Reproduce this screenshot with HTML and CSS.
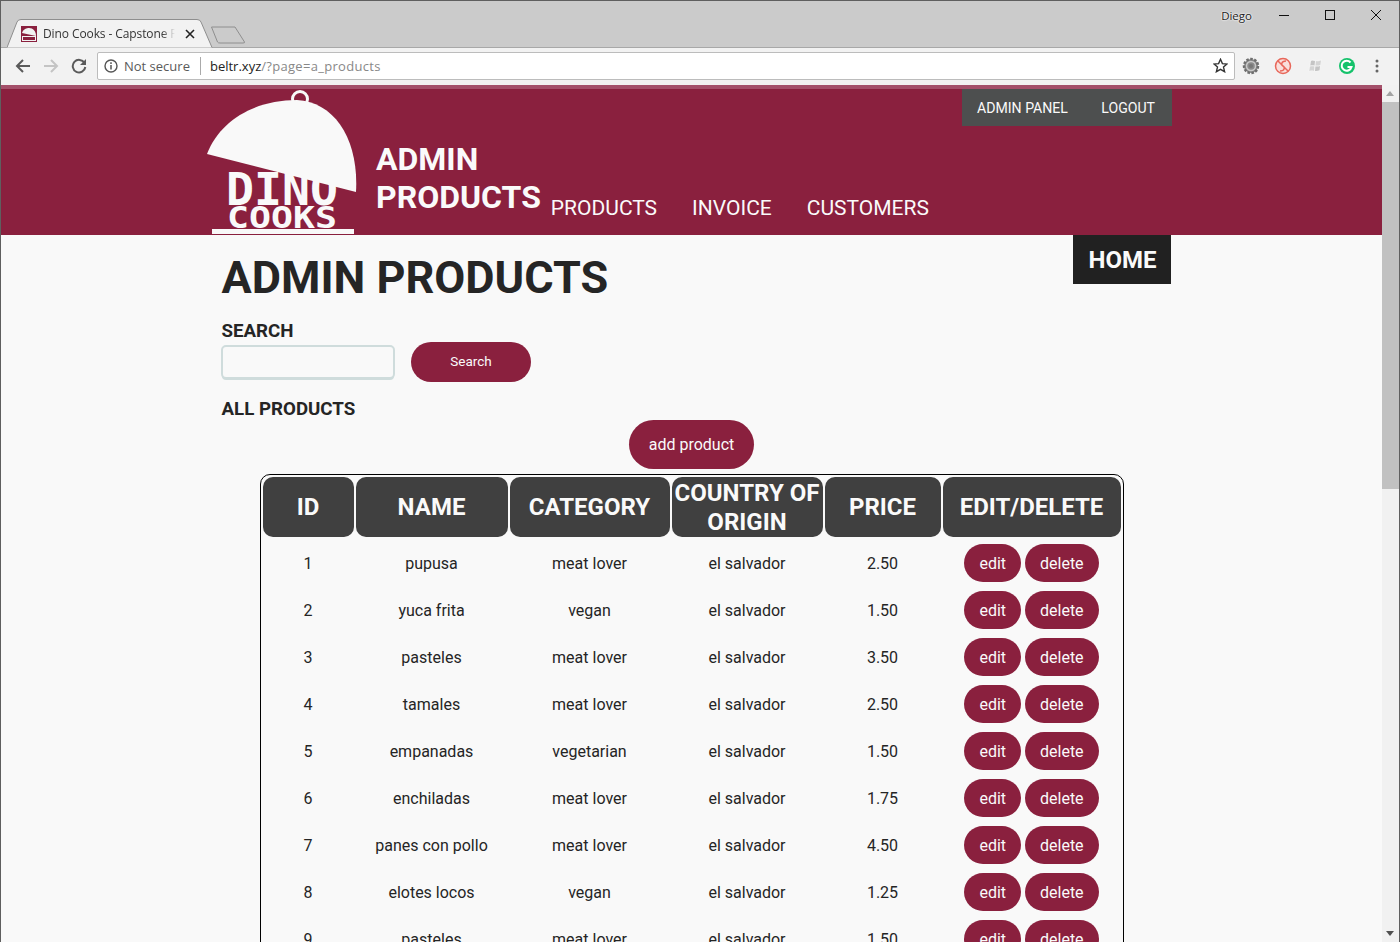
FILE: index.html
```html
<!DOCTYPE html>
<html>
    <head>
        <meta charset="utf-8">
        <title>Dino Cooks - Capstone Project</title>
        <link rel="stylesheet" href="styles.css">
    </head>

    <body>
        <div class="window">

            <!-- browser title bar and tab -->
            <div class="titleBar">
                <div class="tab">
                    <svg class="tabShape" width="206" height="29" viewBox="0 0 206 29">
                        <path d="M0 28.5 L10 3 Q11 .5 14 .5 H190 Q193 .5 194 3 L205 28.5" fill="#f2f2f2" stroke="#8e8e8e"/>
                    </svg>
                    <svg class="favicon" width="16" height="16" viewBox="0 0 16 16">
                        <rect width="16" height="16" fill="#8a203e"/>
                        <path d="M1 7 C2 3 6 2 8 2 C12 2 15 5 15 10 Z" fill="#f2f2f2"/>
                        <rect x="1" y="10" width="14" height="5" fill="#f2f2f2"/>
                        <rect x="2" y="11" width="12" height="3" fill="#8a203e"/>
                    </svg>
                    <span class="tabTitle">Dino Cooks - Capstone P</span>
                    <svg class="tabClose" width="10" height="10" viewBox="0 0 10 10">
                        <path d="M1 1 L9 9 M9 1 L1 9" stroke="#222" stroke-width="1.6"/>
                    </svg>
                </div>
                <svg class="newTab" width="36" height="18" viewBox="0 0 36 18">
                    <path d="M1.500 1 H25 L34.500 16 Q35 17 33 17 H10 Q8 17 7.500 16 Z" fill="#cbcbcb" stroke="#8e8e8e"/>
                </svg>
                <span class="userName">Diego</span>
                <div class="windowButtons">
                    <svg width="10" height="10" viewBox="0 0 10 10"><path d="M0 5.500 H10" stroke="#111"/></svg>
                    <svg width="10" height="10" viewBox="0 0 10 10"><rect x=".5" y=".5" width="9" height="9" fill="none" stroke="#111"/></svg>
                    <svg width="10" height="10" viewBox="0 0 10 10"><path d="M0 0 L10 10 M10 0 L0 10" stroke="#111"/></svg>
                </div>
            </div>

            <!-- browser toolbar -->
            <div class="toolBar">
                <svg class="navIcon" width="16" height="16" viewBox="0 0 16 16">
                    <path d="M15 8 H2 M8 2 L2 8 L8 14" fill="none" stroke="#5a5a5a" stroke-width="2"/>
                </svg>
                <svg class="navIcon" width="16" height="16" viewBox="0 0 16 16">
                    <path d="M1 8 H14 M8 2 L14 8 L8 14" fill="none" stroke="#c4c4c4" stroke-width="2"/>
                </svg>
                <svg class="navIcon" width="16" height="16" viewBox="0 0 16 16">
                    <path d="M13.500 5 A6.300 6.300 0 1 0 14.300 9" fill="none" stroke="#5a5a5a" stroke-width="2"/>
                    <path d="M15 1 V7 H9 Z" fill="#5a5a5a"/>
                </svg>
                <div class="addressBar">
                    <svg width="14" height="14" viewBox="0 0 14 14">
                        <circle cx="7" cy="7" r="6" fill="none" stroke="#555" stroke-width="1.400"/>
                        <path d="M7 6 V10.500 M7 3.300 V5" stroke="#555" stroke-width="1.500"/>
                    </svg>
                    <span class="notSecure">Not secure</span>
                    <span class="urlHost">beltr.xyz</span><span class="urlPath">/?page=a_products</span>
                    <svg class="star" width="15" height="15" viewBox="0 0 15 15">
                        <path d="M7.500 1.300 L9.400 5.600 L14 6 L10.500 9.100 L11.600 13.700 L7.500 11.300 L3.400 13.700 L4.500 9.100 L1 6 L5.600 5.600 Z" fill="none" stroke="#333" stroke-width="1.400"/>
                    </svg>
                </div>
                <div class="extensions">
                    <svg width="18" height="18" viewBox="0 0 18 18">
                        <circle cx="9" cy="9" r="7" fill="#8a8a8a" stroke="#6e6e6e" stroke-width="2.500" stroke-dasharray="2.500 1.500"/>
                        <circle cx="9" cy="9" r="4.500" fill="none" stroke="#c9c9c9" stroke-width="1.500"/>
                        <circle cx="9" cy="9" r="2" fill="#777"/>
                    </svg>
                    <svg width="18" height="18" viewBox="0 0 18 18">
                        <circle cx="9" cy="9" r="7.500" fill="#f9dfdb" stroke="#e8675a" stroke-width="1.500"/>
                        <path d="M4 4 L14 14 M12 4 C7 4 7 8 9 9 C11 10 11 14 6 14" fill="none" stroke="#e8675a" stroke-width="1.500"/>
                    </svg>
                    <svg width="18" height="18" viewBox="0 0 18 18">
                        <path d="M4 3 C7 1 9 4 16 2 L14 14 C8 16 6 13 2 15 Z" fill="#f4f4f4"/>
                        <path d="M5 4 C6 3 7 3.500 9 4 L8.500 8.500 C7 8 6 8 4.300 8.500 Z" fill="#c4c4c4"/>
                        <path d="M10 4 C12 4.500 13 4 15 3.500 L14.300 8 C13 8.500 11.500 8.800 9.500 8.500 Z" fill="#d4d4d4"/>
                        <path d="M4 9.500 C6 9 7 9 8.300 9.500 L8 14 C7 13.500 5.500 13.300 3.300 14 Z" fill="#d4d4d4"/>
                        <path d="M9.400 9.500 C11.500 9.800 13 9.500 14 9 L13.500 13.300 C12 14 10.500 14.300 9 14 Z" fill="#c4c4c4"/>
                    </svg>
                    <svg width="18" height="18" viewBox="0 0 18 18">
                        <circle cx="9" cy="9" r="8" fill="#15c26b"/>
                        <path d="M12.500 5.500 A5 5 0 1 0 13.500 10 H9.500" fill="none" stroke="#fff" stroke-width="2"/>
                    </svg>
                    <svg class="menuDots" width="4" height="14" viewBox="0 0 4 14">
                        <circle cx="2" cy="2" r="1.500" fill="#666"/>
                        <circle cx="2" cy="7" r="1.500" fill="#666"/>
                        <circle cx="2" cy="12" r="1.500" fill="#666"/>
                    </svg>
                </div>
            </div>

            <div class="viewport">
                <div class="page">

                    <div class="headerDiv">
                        <svg class="logo" width="150" height="146" viewBox="0 0 150 146">
                            <text class="logoDino" x="19" y="116" textLength="112" lengthAdjust="spacingAndGlyphs">DINO</text>
                            <text class="logoCooks" x="20" y="139" textLength="110" lengthAdjust="spacingAndGlyphs">COOKS</text>
                            <rect x="5" y="140" width="142" height="5" fill="#f9f9f9"/>
                            <circle cx="93" cy="10" r="7.500" fill="none" stroke="#f9f9f9" stroke-width="3"/>
                            <path d="M0 65 C13 31 48 11 90 11 C128 13 152 51 149 103 Z" fill="#f9f9f9"/>
                        </svg>
                        <h1 class="headerTitle">ADMIN<br>PRODUCTS</h1>
                        <div class="mainNav">
                            <a>PRODUCTS</a>
                            <a>INVOICE</a>
                            <a>CUSTOMERS</a>
                        </div>
                        <div class="adminNav">
                            <a>ADMIN PANEL</a>
                            <a>LOGOUT</a>
                        </div>
                    </div>

                    <div class="contentDiv">
                        <a class="homeLink">HOME</a>
                        <h1 class="pageTitle">ADMIN PRODUCTS</h1>

                        <h3 class="searchLabel">SEARCH</h3>
                        <div class="searchRow">
                            <input class="searchInput" type="text">
                            <button class="pillButton searchButton">Search</button>
                        </div>

                        <h3 class="allLabel">ALL PRODUCTS</h3>
                        <div class="addRow">
                            <button class="pillButton addButton">add product</button>
                        </div>

                        <table class="productTable">
                            <colgroup>
                                <col class="colId"><col class="colName"><col class="colCategory">
                                <col class="colCountry"><col class="colPrice"><col class="colEdit">
                            </colgroup>
                            <tr>
                                <th>ID</th><th>NAME</th><th>CATEGORY</th><th class="wrapHead">COUNTRY OF ORIGIN</th><th>PRICE</th><th>EDIT/DELETE</th>
                            </tr>
                            <tr>
                                <td>1</td><td>pupusa</td><td>meat lover</td><td>el salvador</td><td>2.50</td>
                                <td class="actionCell"><button class="pillButton">edit</button> <button class="pillButton">delete</button></td>
                            </tr>
                            <tr>
                                <td>2</td><td>yuca frita</td><td>vegan</td><td>el salvador</td><td>1.50</td>
                                <td class="actionCell"><button class="pillButton">edit</button> <button class="pillButton">delete</button></td>
                            </tr>
                            <tr>
                                <td>3</td><td>pasteles</td><td>meat lover</td><td>el salvador</td><td>3.50</td>
                                <td class="actionCell"><button class="pillButton">edit</button> <button class="pillButton">delete</button></td>
                            </tr>
                            <tr>
                                <td>4</td><td>tamales</td><td>meat lover</td><td>el salvador</td><td>2.50</td>
                                <td class="actionCell"><button class="pillButton">edit</button> <button class="pillButton">delete</button></td>
                            </tr>
                            <tr>
                                <td>5</td><td>empanadas</td><td>vegetarian</td><td>el salvador</td><td>1.50</td>
                                <td class="actionCell"><button class="pillButton">edit</button> <button class="pillButton">delete</button></td>
                            </tr>
                            <tr>
                                <td>6</td><td>enchiladas</td><td>meat lover</td><td>el salvador</td><td>1.75</td>
                                <td class="actionCell"><button class="pillButton">edit</button> <button class="pillButton">delete</button></td>
                            </tr>
                            <tr>
                                <td>7</td><td>panes con pollo</td><td>meat lover</td><td>el salvador</td><td>4.50</td>
                                <td class="actionCell"><button class="pillButton">edit</button> <button class="pillButton">delete</button></td>
                            </tr>
                            <tr>
                                <td>8</td><td>elotes locos</td><td>vegan</td><td>el salvador</td><td>1.25</td>
                                <td class="actionCell"><button class="pillButton">edit</button> <button class="pillButton">delete</button></td>
                            </tr>
                            <tr>
                                <td>9</td><td>pasteles</td><td>meat lover</td><td>el salvador</td><td>1.50</td>
                                <td class="actionCell"><button class="pillButton">edit</button> <button class="pillButton">delete</button></td>
                            </tr>
                        </table>
                    </div>

                </div>

                <div class="scrollBar">
                    <span class="scrollUp"></span>
                    <span class="scrollThumb"></span>
                    <span class="scrollGap"></span>
                    <span class="scrollDown"></span>
                </div>
            </div>

        </div>
    </body>
</html>
```

FILE: styles.css
```css
* {
    box-sizing: border-box;
}

html, body {
    margin: 0;
    height: 100%;
    overflow: hidden;
}

body {
    font-family: Roboto, "Liberation Sans", sans-serif;
    color: #252525;
}

.window {
    display: flex;
    flex-direction: column;
    width: 1400px;
    height: 942px;
    border: 1px solid #5f5f5f;
    border-bottom: none;
    background-color: #f9f9f9;
}

/* browser chrome */

.titleBar {
    display: flex;
    align-items: flex-start;
    height: 46px;
    flex: none;
    background-color: #cbcbcb;
}

.tab {
    position: relative;
    display: flex;
    align-items: center;
    width: 206px;
    height: 29px;
    margin-top: 18px;
    margin-left: 6px;
    padding-left: 14px;
}

.tabShape {
    position: absolute;
    left: 0;
    top: 0;
}

.favicon, .tabTitle, .tabClose {
    position: relative;
}

.tabTitle {
    width: 132px;
    margin-left: 6px;
    overflow: hidden;
    white-space: nowrap;
    font-family: "Open Sans", sans-serif;
    font-size: 12px;
    letter-spacing: -.1px;
    color: #333;
    -webkit-mask-image: linear-gradient(to right, #000 90%, transparent);
    mask-image: linear-gradient(to right, #000 90%, transparent);
}

.tabClose {
    margin-left: 10px;
}

.newTab {
    margin-top: 25px;
    margin-left: -3px;
}

.userName {
    margin-left: auto;
    margin-top: 7px;
    font-family: "Open Sans", sans-serif;
    font-size: 11.5px;
    color: #222;
    text-shadow: 0 0 2px #fff, 0 0 2px #fff;
}

.windowButtons {
    display: flex;
    gap: 36px;
    margin-top: 9px;
    margin-left: 27px;
    margin-right: 18px;
}

.toolBar {
    display: flex;
    align-items: center;
    height: 38px;
    flex: none;
    padding-left: 14px;
    padding-bottom: 2px;
    border-top: 1px solid #a8a8a8;
    background-color: #f2f2f2;
}

.navIcon {
    margin-right: 12px;
}

.addressBar {
    display: flex;
    align-items: center;
    width: 1138px;
    height: 28px;
    margin-left: -2px;
    padding: 0 6px;
    border: 1px solid #bcbcbc;
    border-radius: 2px;
    background-color: #fff;
    font-family: "Open Sans", sans-serif;
    font-size: 13px;
}

.notSecure {
    margin-left: 6px;
    padding-right: 10px;
    margin-right: 9px;
    color: #5a5a5a;
    border-right: 1px solid #aaa;
}

.urlHost {
    color: #222;
}

.urlPath {
    color: #888;
    letter-spacing: .3px;
}

.star {
    margin-left: auto;
}

.extensions {
    display: flex;
    align-items: center;
    gap: 14px;
    margin-left: 7px;
}

.menuDots {
    margin-left: 5px;
}

/* page */

.viewport {
    display: flex;
    flex: 1;
    min-height: 0;
}

.page {
    flex: 1;
    min-width: 0;
    overflow: hidden;
}

.scrollBar {
    display: flex;
    flex-direction: column;
    width: 17px;
    flex: none;
    background-color: #f1f1f1;
}

.scrollUp, .scrollDown {
    height: 17px;
    flex: none;
    position: relative;
}

.scrollUp::after {
    content: "";
    position: absolute;
    left: 4px;
    top: 6px;
    border: 4px solid transparent;
    border-top: none;
    border-bottom: 5px solid #a3a3a3;
}

.scrollDown::after {
    content: "";
    position: absolute;
    left: 4px;
    top: 6px;
    border: 4px solid transparent;
    border-bottom: none;
    border-top: 5px solid #505050;
}

.scrollThumb {
    height: 387px;
    flex: none;
    background-color: #c1c1c1;
}

.scrollGap {
    flex: 1;
}

.headerDiv {
    display: flex;
    align-items: flex-end;
    height: 150px;
    padding-left: 206px;
    padding-right: 210px;
    border-top: 4px solid #a4506a;
    background-color: #8a203e;
    color: #fafafa;
}

.logo {
    flex: none;
}

.logoDino {
    font-family: "DejaVu Sans Mono", monospace;
    font-weight: bold;
    font-size: 44px;
    fill: #f9f9f9;
}

.logoCooks {
    font-family: "DejaVu Sans Mono", monospace;
    font-weight: bold;
    font-size: 31px;
    fill: #f9f9f9;
}

.headerTitle {
    margin: 0 0 19px 19px;
    font-size: 32px;
    line-height: 38px;
    font-weight: 700;
}

.mainNav {
    display: flex;
    gap: 35px;
    margin-left: 10px;
    margin-bottom: 14px;
    font-size: 21px;
    line-height: 26px;
}

.adminNav {
    display: flex;
    align-self: flex-start;
    justify-content: space-between;
    margin-left: auto;
    width: 210px;
    padding: 0 17px 0 15px;
    height: 37px;
    align-items: center;
    background-color: #4d4f4f;
    font-size: 14.1px;
}

.contentDiv {
    width: 960px;
    margin: 0 auto;
    padding: 0 10px;
}

.homeLink {
    float: right;
    margin-right: -9px;
    padding: 0 14px 0 15px;
    height: 49px;
    line-height: 50px;
    background-color: #212121;
    color: #fafafa;
    font-size: 24px;
    font-weight: 700;
}

.pageTitle {
    margin: 0;
    padding-top: 16px;
    font-size: 45px;
    line-height: 53px;
    font-weight: 700;
}

.searchLabel {
    margin: 15px 0 0;
    font-size: 18.72px;
    line-height: 24px;
    font-weight: 700;
}

.searchRow {
    display: flex;
    align-items: center;
    gap: 16px;
    margin-top: -1px;
}

.searchInput {
    width: 174px;
    height: 34px;
    margin-left: -1px;
    margin-top: -1px;
    border: 2px solid #cfdcdc;
    border-radius: 5px;
    background-color: #f9f9f9;
    box-shadow: 0 2px 0 -1px #cfdcdc;
}

.pillButton {
    display: inline-block;
    height: 38px;
    padding: 0 15px;
    border: none;
    border-radius: 20px;
    background-color: #8a203e;
    color: #fafafa;
    font-family: Roboto, sans-serif;
    font-size: 16px;
}

.searchButton {
    width: 120px;
    height: 40px;
    padding: 0 0 3px 1px;
    font-size: 13.5px;
}

.allLabel {
    margin: 15px 0 0;
    font-size: 18.72px;
    line-height: 24px;
    font-weight: 700;
}

.addRow {
    display: flex;
    justify-content: center;
    margin-top: -1px;
}

.addButton {
    width: 125px;
    height: 49px;
    border-radius: 25px;
}

.productTable {
    table-layout: fixed;
    width: 864px;
    margin: 5px auto 0;
    border: 1px solid #000;
    border-radius: 10px;
    border-spacing: 2px;
}

.colId { width: 91px; }
.colName { width: 152px; }
.colCategory { width: 160px; }
.colCountry { width: 151px; }
.colPrice { width: 116px; }
.colEdit { width: 178px; }

.productTable th {
    height: 60px;
    padding: 0;
    border-radius: 10px;
    background-color: #404040;
    color: #fafafa;
    font-size: 24px;
    line-height: 29px;
    font-weight: 700;
}

.productTable th.wrapHead {
    padding-top: 2px;
}

.productTable td {
    height: 45px;
    padding: 4px 0 0;
    text-align: center;
    font-size: 16px;
}

.productTable td.actionCell {
    padding-top: 2px;
}

.actionCell .pillButton {
    padding-top: 2px;
}
```
